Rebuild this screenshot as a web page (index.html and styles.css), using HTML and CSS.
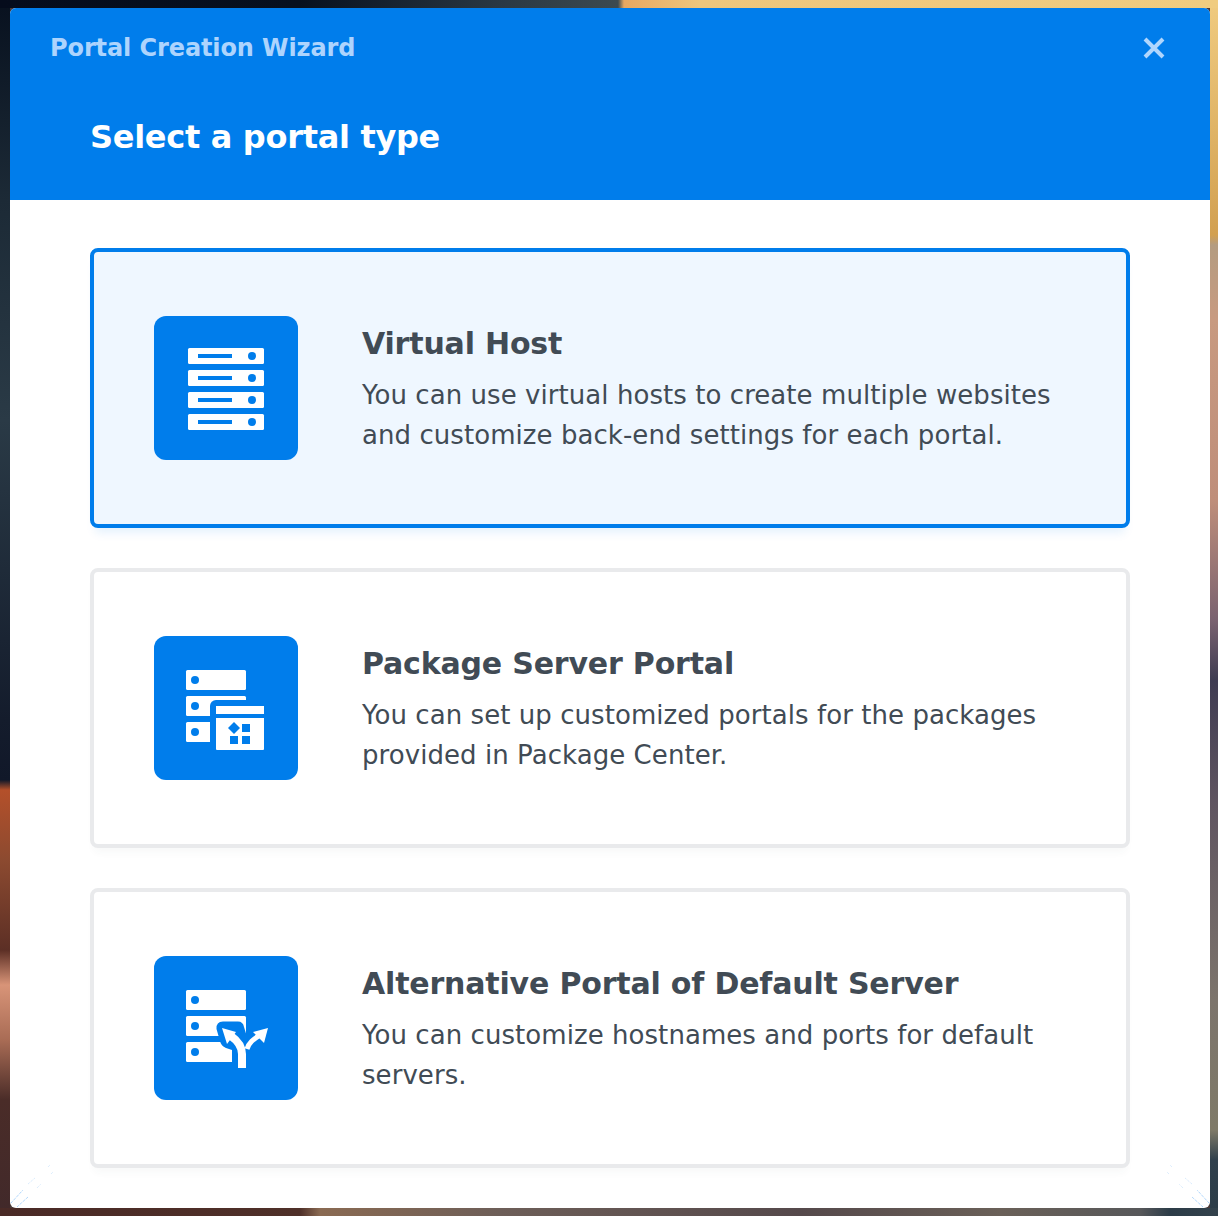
FILE: index.html
```html
<!DOCTYPE html>
<html>
<head>
<meta name="viewport" content="width=device-width, initial-scale=1">
<title>Portal Creation Wizard</title>
<link rel="stylesheet" href="styles.css">
</head>
<body>

<div class="wizard">
  <div class="wizard-head">
    <div class="wizard-bar">
      <span class="wizard-name">Portal Creation Wizard</span>
      <svg class="close-btn" width="22" height="22" viewBox="0 0 22 22">
        <path d="M2 2 L20 20 M20 2 L2 20" stroke="#b0d6fd" stroke-width="4" fill="none"/>
      </svg>
    </div>
    <h1 class="wizard-title">Select a portal type</h1>
  </div>

  <div class="wizard-body">
    <div class="card selected">
      <svg class="card-icon" width="144" height="144" viewBox="0 0 144 144">
        <rect width="144" height="144" rx="12" fill="#007deb"/>
        <g fill="#fff">
          <rect x="34" y="32" width="76" height="16" rx="1.5"/>
          <rect x="34" y="54" width="76" height="16" rx="1.5"/>
          <rect x="34" y="76" width="76" height="16" rx="1.5"/>
          <rect x="34" y="98" width="76" height="16" rx="1.5"/>
        </g>
        <g fill="#007deb">
          <rect x="44" y="38" width="34" height="4"/>
          <rect x="44" y="60" width="34" height="4"/>
          <rect x="44" y="82" width="34" height="4"/>
          <rect x="44" y="104" width="34" height="4"/>
          <circle cx="98" cy="40" r="4"/>
          <circle cx="98" cy="62" r="4"/>
          <circle cx="98" cy="84" r="4"/>
          <circle cx="98" cy="106" r="4"/>
        </g>
      </svg>
      <div class="card-text">
        <h2>Virtual Host</h2>
        <p>You can use virtual hosts to create multiple websites<br>and customize back-end settings for each portal.</p>
      </div>
    </div>

    <div class="card">
      <svg class="card-icon" width="144" height="144" viewBox="0 0 144 144">
        <rect width="144" height="144" rx="12" fill="#007deb"/>
        <g fill="#fff">
          <rect x="32" y="34" width="60" height="20" rx="1.5"/>
          <rect x="32" y="60" width="60" height="20" rx="1.5"/>
          <rect x="32" y="86" width="60" height="20" rx="1.5"/>
        </g>
        <g fill="#007deb">
          <circle cx="41" cy="44" r="4"/>
          <circle cx="41" cy="70" r="4"/>
          <circle cx="41" cy="96" r="4"/>
          <rect x="56" y="64" width="60" height="56" rx="6"/>
        </g>
        <g fill="#fff">
          <rect x="62" y="70" width="48" height="8"/>
          <path d="M62 82 H110 V113 Q110 114 109 114 H63 Q62 114 62 113 Z"/>
        </g>
        <g fill="#007deb">
          <rect x="88" y="88" width="8" height="8"/>
          <rect x="76" y="100" width="8" height="8"/>
          <rect x="88" y="100" width="8" height="8"/>
          <path d="M80 86 L86 92 L80 98 L74 92 Z"/>
        </g>
      </svg>
      <div class="card-text">
        <h2>Package Server Portal</h2>
        <p>You can set up customized portals for the packages<br>provided in Package Center.</p>
      </div>
    </div>

    <div class="card">
      <svg class="card-icon" width="144" height="144" viewBox="0 0 144 144">
        <rect width="144" height="144" rx="12" fill="#007deb"/>
        <g fill="#fff">
          <rect x="32" y="34" width="60" height="20" rx="1.5"/>
          <rect x="32" y="60" width="60" height="20" rx="1.5"/>
          <rect x="32" y="86" width="60" height="20" rx="1.5"/>
        </g>
        <g fill="#007deb">
          <circle cx="41" cy="44" r="4"/>
          <circle cx="41" cy="70" r="4"/>
          <circle cx="41" cy="96" r="4"/>
          <path d="M69 65.5 H84 Q89 65.5 90 71 L94 84 L96 114 H78 V94 L72 92 Q67 90 66 85 L62.5 73 Q62 65.5 69 65.5 Z"/>
        </g>
        <g fill="#fff">
          <path d="M88 112 V98 C88 91 84 85 77 80" fill="none" stroke="#fff" stroke-width="8"/>
          <path d="M68 72 L82 76 L73 88 Z"/>
          <path d="M93 93 C95 86 100 83 106 79" fill="none" stroke="#fff" stroke-width="5"/>
          <path d="M114 72 L99 76 L110 87 Z"/>
        </g>
      </svg>
      <div class="card-text">
        <h2>Alternative Portal of Default Server</h2>
        <p>You can customize hostnames and ports for default<br>servers.</p>
      </div>
    </div>
  </div>

  <!-- resize marks in the bottom corners -->
  <svg class="corner corner-left" width="44" height="44" viewBox="0 0 44 44">
    <path d="M1 39 L13 26 M7 43 L18 33" stroke="#8cc4fa" stroke-width="1" stroke-dasharray="1 1" fill="none"/>
    <path d="M18 20 L25 14 M27 24 L31 20 M38 3 L40 1 M41 10 L43 8" stroke="#cfe6fd" stroke-width="1" stroke-dasharray="1 1" fill="none"/>
  </svg>
  <svg class="corner corner-right" width="44" height="44" viewBox="0 0 44 44">
    <path d="M43 39 L31 26 M37 43 L26 33" stroke="#8cc4fa" stroke-width="1" stroke-dasharray="1 1" fill="none"/>
    <path d="M26 20 L19 14 M17 24 L13 20 M6 3 L4 1 M3 10 L1 8" stroke="#cfe6fd" stroke-width="1" stroke-dasharray="1 1" fill="none"/>
  </svg>
</div>

</body>
</html>
```

FILE: styles.css
```css
* {
  box-sizing: border-box;
}

html, body {
  height: 100%;
}

/* wallpaper only shows as a thin strip round the window */
body {
  margin: 0;
  padding: 8px 8px 8px 10px;
  overflow: hidden;
  font-family: "DejaVu Sans", sans-serif;
  background-color: #4a3a38;
  background-repeat: no-repeat;
  background-image:
    linear-gradient(90deg, #050c1c 0, #07101f 300px, #2a3843 500px, #3c4a50 618px, #e8a862 624px, #eec67c 700px, #f0cc80 1218px),
    linear-gradient(90deg, #4a2a26 0, #4f3029 300px, #8a6a52 320px, #6d5e58 500px, #55494b 800px, #6a6058 1000px, #57585a 1140px, #2c3c48 1170px, #33424c 1218px),
    linear-gradient(180deg, #08111f 0, #1c2a36 200px, #2a3a46 420px, #141c2c 720px, #111829 780px, #b4502a 790px, #8c4a30 860px, #5c2f25 950px, #d89478 985px, #a96c55 1040px, #4a2c28 1100px, #41292a 1216px),
    linear-gradient(180deg, #f0cb80 0, #d2a050 235px, #b49c80 245px, #c89a80 320px, #bf8e7a 500px, #7a6270 620px, #3f3c52 680px, #5f5460 800px, #7c746c 1000px, #7f7a68 1130px, #30404c 1160px, #2c3c48 1216px);
  background-size: 100% 8px, 100% 8px, 10px 100%, 8px 100%;
  background-position: 0 0, 0 100%, 0 0, 100% 0;
}

.wizard {
  position: relative;
  height: 1200px;
  border-radius: 6px;
  overflow: hidden;
  background: #fff;
}

.wizard-head {
  height: 192px;
  background-color: #007deb;
}

.wizard-bar {
  display: flex;
  align-items: center;
  justify-content: space-between;
  padding: 25px 45px 0 40px;
}

.wizard-name {
  font-size: 24px;
  font-weight: bold;
  line-height: 30px;
  letter-spacing: -0.1px;
  color: #add4fd;
}

.wizard-title {
  margin: 54px 0 0 80px;
  font-size: 32px;
  line-height: 40px;
  font-weight: bold;
  letter-spacing: -0.3px;
  color: #fff;
}

.wizard-body {
  display: flex;
  flex-direction: column;
  gap: 40px;
  padding: 48px 80px 0;
}

.card {
  display: flex;
  align-items: center;
  gap: 64px;
  height: 280px;
  padding: 0 60px;
  border: 4px solid #e9eaec;
  border-radius: 8px;
  background-color: #fff;
  box-shadow: 0 8px 8px -4px rgba(60, 70, 80, 0.04);
}

.card.selected {
  border-color: #007deb;
  background-color: #eff7ff;
  box-shadow: 0 10px 10px -5px rgba(0, 125, 235, 0.1);
}

.card-icon {
  flex: none;
}

.card-text {
  padding-top: 3px;
  color: #414b55;
}

.card-text h2 {
  margin: 0 0 11px;
  font-size: 30px;
  line-height: 40px;
  font-weight: bold;
  letter-spacing: -0.18px;
}

.card-text p {
  margin: 0;
  font-size: 26px;
  line-height: 40px;
  letter-spacing: 0.06px;
}

.corner {
  position: absolute;
  bottom: 0;
}

.corner-left {
  left: 0;
}

.corner-right {
  right: 0;
}
```
